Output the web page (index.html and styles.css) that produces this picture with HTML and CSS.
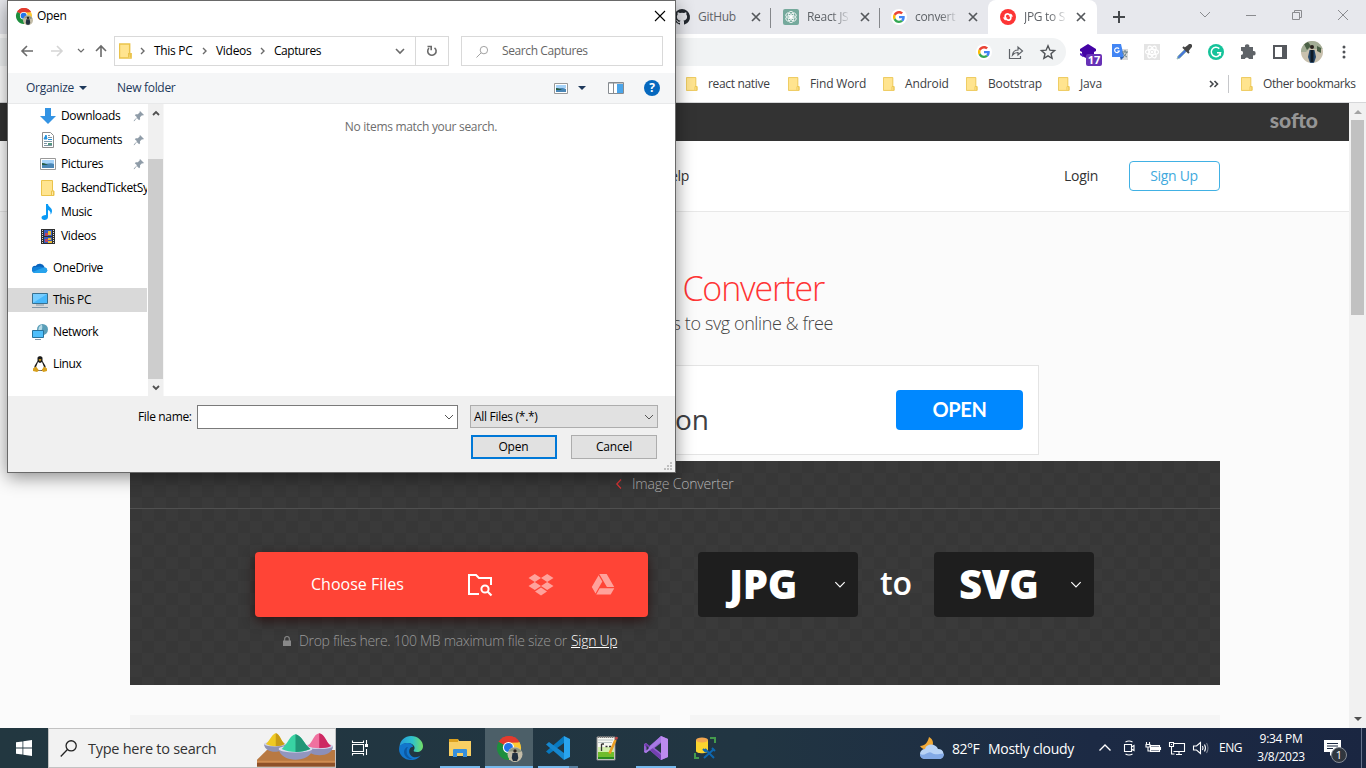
FILE: index.html
```html
<!DOCTYPE html>
<html lang="en">
<head>
<meta charset="utf-8">
<title>JPG to SVG</title>
<link rel="stylesheet" href="styles.css">
</head>
<body>
<svg class="defs" width="0" height="0">
  <defs>
    <symbol id="folder" viewBox="0 0 14 16"><path d="M.5.5h11v10.500h1.500v4.500H.5z" fill="#ffe48f" stroke="#eac34c"/><path d="M10.500 15v-4h2v4" fill="#ffe9a5" stroke="#eac34c"/></symbol>
    <symbol id="google" viewBox="0 0 48 48"><path fill="#ea4335" d="M24 9.500c3.500 0 6.700 1.200 9.200 3.600l6.900-6.900C35.900 2.400 30.500 0 24 0 14.600 0 6.500 5.400 2.600 13.200l8 6.200C12.400 13.700 17.700 9.500 24 9.500z"/><path fill="#4285f4" d="M47 24.600c0-1.600-.2-3.100-.4-4.600H24v9h12.900c-.6 3-2.200 5.500-4.700 7.200l7.700 6C44.400 38 47 31.800 47 24.600z"/><path fill="#fbbc05" d="M10.500 28.600a14 14 0 0 1 0-9.200l-8-6.200a24 24 0 0 0 0 21.600z"/><path fill="#34a853" d="M24 48c6.500 0 11.900-2.100 15.900-5.800l-7.700-6c-2.200 1.500-4.900 2.300-8.200 2.300-6.300 0-11.600-4.200-13.500-9.900l-8 6.200C6.500 42.600 14.600 48 24 48z"/></symbol>
    <symbol id="chrome" viewBox="0 0 24 24" overflow="visible"><path d="M12 12 1.600 6A12 12 0 0 1 22.400 6z" fill="#e33b2e"/><path d="M12 12 22.400 6A12 12 0 0 1 12 24z" fill="#fcc934"/><path d="M12 12v12A12 12 0 0 1 1.600 6z" fill="#1e8e3e"/><path d="M12 6.500h10.700L17 15z" fill="#fcc934"/><path d="M1.600 6 7 15l5-3z" fill="#1e8e3e"/><path d="M1.600 6 12 6.500 22.400 6A12 12 0 0 0 1.600 6z" fill="#e33b2e"/><circle cx="11.500" cy="11.500" r="5.600" fill="#fff"/><circle cx="11.500" cy="11.500" r="4.500" fill="#2374ea"/><circle cx="18" cy="18.500" r="7.500" fill="#c4bda8"/><path d="M11.500 15.500a7.500 7.500 0 0 1 13 0l-3 1-4-1z" fill="#8f9680"/><circle cx="18" cy="15" r="1.700" fill="#2b2420"/><path d="M15.500 17h5l.8 5-1.300 3h-4l-1.300-3z" fill="#22303f"/></symbol>
    <symbol id="pin" viewBox="0 0 12 12"><path d="M7 1l4 4-1.200.5-.8-.2-2 2 .1 2-1 .9-2.300-2.300L1.500 11l-.8.200.3-.9L4 7.300 1.800 5.200l1-1 2 .1 2-2L6.600 1.700z" fill="#8f9ca8"/></symbol>
    <symbol id="down" viewBox="0 0 10 6"><path d="M1 1l4 4 4-4" fill="none" stroke="currentColor"/></symbol>
    <symbol id="x" viewBox="0 0 10 10"><path d="M1 1l8 8M9 1 1 9" fill="none" stroke="currentColor" stroke-width="1.700"/></symbol>
  </defs>
</svg>

<div class="browser">
  <div class="tabs">
    <div class="tab"><svg class="fav" viewBox="0 0 16 16"><path fill="#24292f" d="M8 0a8 8 0 0 0-2.500 15.600c.4.100.5-.2.500-.4v-1.400c-2.200.5-2.700-1-2.700-1-.4-.9-.9-1.200-.9-1.200-.7-.5.100-.5.100-.5.800.1 1.200.8 1.200.8.700 1.300 1.900.9 2.300.7.100-.5.300-.9.500-1.100-1.800-.2-3.600-.9-3.600-4 0-.9.300-1.600.8-2.100-.1-.2-.4-1 .1-2.100 0 0 .7-.2 2.200.8a7.500 7.500 0 0 1 4 0c1.500-1 2.200-.8 2.200-.8.400 1.100.2 1.900.1 2.100.5.600.8 1.300.8 2.100 0 3.100-1.900 3.800-3.700 4 .3.300.6.800.6 1.500v2.200c0 .2.100.5.500.4A8 8 0 0 0 8 0z"/></svg><span class="tab-name">GitHub</span><svg class="close"><use href="#x"/></svg></div>
    <div class="tab"><svg class="fav" viewBox="0 0 16 16"><rect width="16" height="16" rx="2" fill="#75a99c"/><g fill="none" stroke="#fff" stroke-width=".8"><ellipse cx="8" cy="5.500" rx="2.500" ry="3.200"/><ellipse cx="8" cy="5.500" rx="2.500" ry="3.200" transform="rotate(60 8 8)"/><ellipse cx="8" cy="5.500" rx="2.500" ry="3.200" transform="rotate(120 8 8)"/><ellipse cx="8" cy="5.500" rx="2.500" ry="3.200" transform="rotate(180 8 8)"/><ellipse cx="8" cy="5.500" rx="2.500" ry="3.200" transform="rotate(240 8 8)"/><ellipse cx="8" cy="5.500" rx="2.500" ry="3.200" transform="rotate(300 8 8)"/></g></svg><span class="tab-name fade">React JS</span><svg class="close"><use href="#x"/></svg></div>
    <div class="tab last"><svg class="fav" viewBox="0 0 16 16"><circle cx="8" cy="8" r="8" fill="#fff"/><use href="#google" x="2" y="2" width="12" height="12"/></svg><span class="tab-name fade">convert i</span><svg class="close"><use href="#x"/></svg></div>
    <div class="tab active"><svg class="fav" viewBox="0 0 16 16"><circle cx="8" cy="8" r="8" fill="#fd3535"/><path d="M5.200 10.500V7a2.200 2.200 0 0 1 3-2L10 6M10.800 5.500V9a2.200 2.200 0 0 1-3 2L6 10" fill="none" stroke="#fff" stroke-width="1.700"/><path d="M2.800 8.500h4.600l-2.200 3zM8.600 7.500h4.600l-2.400-3z" fill="#fff"/></svg><span class="tab-name fade">JPG to S</span><svg class="close"><use href="#x"/></svg></div>
    <svg class="plus" viewBox="0 0 12 12"><path d="M6 0v12M0 6h12" stroke="#45484c" stroke-width="2"/></svg>
    <div class="wincontrols">
      <svg viewBox="0 0 12 12"><path d="M1 3l5 5 5-5"/></svg>
      <svg viewBox="0 0 12 12"><path d="M1 6.500h10"/></svg>
      <svg viewBox="0 0 12 12"><path d="M1.500 3.500h7v7h-7zM3.500 3V1.500h7v7H9"/></svg>
      <svg viewBox="0 0 12 12"><path d="M1 1l10 10M11 1 1 11"/></svg>
    </div>
  </div>
  <div class="toolbar">
    <div class="omnibox">
      <svg viewBox="0 0 16 16"><circle cx="8" cy="8" r="8" fill="#fff"/><use href="#google" x="2" y="2" width="12" height="12"/></svg>
      <svg viewBox="0 0 16 16"><path d="M1.500 5v9.500h11V12" fill="none" stroke="#5f6368" stroke-width="1.200"/><path d="M4.500 11c.5-3.500 2.500-5 5.500-5V3l4.500 4L10 11V8.500c-2.500 0-4 .7-5.500 2.500z" fill="none" stroke="#5f6368" stroke-width="1.200"/></svg>
      <svg viewBox="0 0 16 16"><path d="M8 1.800l1.900 4.400 4.700.4-3.600 3.100 1.100 4.600L8 11.800l-4.100 2.500L5 9.700 1.400 6.600l4.700-.4z" fill="none" stroke="#505357" stroke-width="1.400"/></svg>
    </div>
    <div class="extensions">
      <svg viewBox="0 0 24 24"><path d="M12 4l8 5v2l-2 1v4l-6 3-6-3v-4l-2-1V9z" fill="#4403a5"/><path d="M4 13l3 1v3l-3-2z" fill="#5a20c0"/></svg>
      <svg viewBox="0 0 24 24"><path d="M12 9h8v11h-8z" fill="#d8d8d8"/><path d="M4 4h9l3 13H4z" fill="#4285f4"/><path d="M12 17h4l-3 3z" fill="#2a5db0"/><path d="M14 12h6M17 10v2M15 17c2-1 3-3 3.500-5M15 13c1 2 2 3 4 4" stroke="#667f86" fill="none"/><path d="M11 8.800A2.400 2.400 0 1 0 11.300 11H9.300" fill="none" stroke="#fff" stroke-width="1.200"/></svg>
      <svg viewBox="0 0 24 24"><rect x="4" y="4" width="16" height="16" fill="#e4e4e4"/><g fill="none" stroke="#fff" stroke-width="1.200"><ellipse cx="12" cy="12" rx="6.500" ry="2.600"/><ellipse cx="12" cy="12" rx="6.500" ry="2.600" transform="rotate(60 12 12)"/><ellipse cx="12" cy="12" rx="6.500" ry="2.600" transform="rotate(120 12 12)"/></g><circle cx="12" cy="12" r="1.300" fill="#fff"/></svg>
      <svg viewBox="0 0 24 24"><path d="M5 19l1-3 7-7 2 2-7 7z" fill="#4a79d8" stroke="#9bb"/><path d="M12 8l4-3 1-1h2l1 1v2l-1 1-3 4z" fill="#464646"/><path d="M11 7l6 6" stroke="#464646" stroke-width="2"/></svg>
      <svg viewBox="0 0 24 24"><circle cx="12" cy="12" r="8" fill="#15c39a"/><path d="M15.300 8.600A4.700 4.700 0 1 0 16.600 12.700H13M16.300 12.700v3" fill="none" stroke="#fff" stroke-width="1.500"/></svg>
      <svg viewBox="0 0 24 24"><path d="M5 7h4a2.200 2.200 0 1 1 4.300 0H17v4a2.200 2.200 0 1 1 0 4.300V19h-4a2.200 2.200 0 0 0-4.200 0H5v-4a2 2 0 0 0 0-4.200z" fill="#5f6368"/></svg>
      <svg viewBox="0 0 24 24"><path d="M6 6h12v12H6z" fill="#fff" stroke="#55585d" stroke-width="2"/><path d="M14 5h5v14h-5z" fill="#55585d"/></svg>
      <svg viewBox="0 0 24 24"><defs><clipPath id="face"><circle cx="12" cy="12" r="11"/></clipPath></defs><g clip-path="url(#face)"><path d="M0 0h24v24H0z" fill="#c9c1ae"/><path d="M0 0h24v9H14l-3-2-5 5H0z" fill="#a3ad96"/><path d="M4 4l4-2 3 4-4 4zM17 6l4 2v5l-4-2z" fill="#4b6046"/><path d="M9.500 10h5l1.500 7-2 6h-4l-2-6z" fill="#27486b"/><path d="M12 10v12" stroke="#101b25" stroke-width="3"/><circle cx="12" cy="7" r="2" fill="#281f1c"/></g></svg>
      <svg viewBox="0 0 24 24"><g fill="#505357"><circle cx="12" cy="7" r="1.500"/><circle cx="12" cy="12" r="1.500"/><circle cx="12" cy="17" r="1.500"/></g></svg>
      <span class="ext-count">17</span>
    </div>
  </div>
  <div class="bookmarks">
    <div class="bm b1"><svg><use href="#folder"/></svg><span>react native</span></div>
    <div class="bm b2"><svg><use href="#folder"/></svg><span>Find Word</span></div>
    <div class="bm b3"><svg><use href="#folder"/></svg><span>Android</span></div>
    <div class="bm b4"><svg><use href="#folder"/></svg><span>Bootstrap</span></div>
    <div class="bm b5"><svg><use href="#folder"/></svg><span>Java</span></div>
    <svg class="more" viewBox="0 0 10 8"><path d="M1 1l3 3-3 3M5.500 1l3 3-3 3" fill="none" stroke="#45484c" stroke-width="1.600"/></svg>
    <div class="bm other"><svg><use href="#folder"/></svg><span>Other bookmarks</span></div>
  </div>
  <div class="viewport">
    <div class="page">
      <div class="softbar"><span>softo</span></div>
      <header class="site-head"><span class="help">Help</span><span class="login">Login</span><a class="signup">Sign Up</a></header>
      <main>
        <h1>Converter</h1>
        <p class="sub">files to svg online &amp; free</p>
        <div class="ad"><span class="ad-text">on</span><span class="ad-btn">OPEN</span></div>
        <section class="converter">
          <div class="crumb"><svg viewBox="0 0 6 10"><path d="M5 .5.800 5 5 9.500" fill="none" stroke="#e03535" stroke-width="1.200"/></svg><span>Image Converter</span></div>
          <div class="work">
            <div class="left">
              <div class="choose"><span>Choose Files</span>
                <svg viewBox="0 0 26 26"><path d="M12 22H2V3h7l3 3h12v7" fill="none" stroke="#fff" stroke-width="2"/><circle cx="18" cy="17" r="3.600" fill="none" stroke="#fff" stroke-width="2"/><path d="M20.500 19.500l4 4" stroke="#fff" stroke-width="2.200"/></svg>
                <svg viewBox="0 0 26 26" fill="#ffa29b"><path d="M6.800 2 13 6 6.800 10 .5 6zM19.200 2l6.300 4-6.300 4L13 6zM6.800 10l6.200 4-6.200 4L.5 14zM19.200 10l6.300 4-6.300 4-6.200-4zM13 15.600l6 3.900-6 4-6-4z"/></svg>
                <svg viewBox="0 0 26 26" fill="#ffa29b"><path d="M9.300 2h7.400l7.500 13h-7.300zM8.600 3.200l3.700 6.300-6.800 12L1.800 15zM9.700 16.200h14.600L20.700 22.500H6.200z"/></svg>
              </div>
              <div class="note"><svg viewBox="0 0 8 10"><path d="M0 4.500h8V10H0z" fill="#898989"/><path d="M1.700 5V2.800a2.300 2.300 0 0 1 4.600 0V5" fill="none" stroke="#898989" stroke-width="1.100"/></svg><span>Drop files here. 100 MB maximum file size or</span><a>Sign Up</a></div>
            </div>
            <div class="format"><b>JPG</b><svg><use href="#down"/></svg></div>
            <span class="to">to</span>
            <div class="format"><b>SVG</b><svg><use href="#down"/></svg></div>
          </div>
        </section>
        <div class="cards"><div></div><div></div></div>
      </main>
    </div>
    <div class="scroll"><svg viewBox="0 0 8 4"><path d="M0 4l4-4 4 4z" fill="#a3a3a3"/></svg><div class="thumb"></div><svg viewBox="0 0 8 4"><path d="M0 0h8L4 4z" fill="#505050"/></svg></div>
  </div>
</div>

<div class="dialog">
  <div class="title"><svg class="app"><use href="#chrome"/></svg><span>Open</span><svg class="shut" viewBox="0 0 12 12"><path d="M1 1l10 10M11 1 1 11" stroke="#000" stroke-width="1.100"/></svg></div>
  <div class="nav">
    <svg class="back" viewBox="0 0 12 12"><path d="M12 6H1M6 1 1 6l5 5"/></svg>
    <svg class="fwd" viewBox="0 0 12 12"><path d="M0 6h11M6 1l5 5-5 5"/></svg>
    <svg class="recent" viewBox="0 0 10 6"><path d="M2 1l3 3 3-3"/></svg>
    <svg class="up" viewBox="0 0 12 12"><path d="M6 12V1M1 6l5-5 5 5"/></svg>
    <div class="address">
      <svg class="dir"><use href="#folder"/></svg>
      <svg class="chev" viewBox="0 0 6 8"><path d="M1 1l3 3-3 3"/></svg><span class="c1">This PC</span>
      <svg class="chev" viewBox="0 0 6 8"><path d="M1 1l3 3-3 3"/></svg><span class="c2">Videos</span>
      <svg class="chev" viewBox="0 0 6 8"><path d="M1 1l3 3-3 3"/></svg><span class="c3">Captures</span>
      <svg class="drop" viewBox="0 0 10 6"><path d="M1 1l4 4 4-4"/></svg>
      <div class="refresh"><svg viewBox="0 0 12 12"><path d="M8.500 2.800A4.200 4.200 0 1 1 3 3.100M1.500 1.500h3.700v3.700"/></svg></div>
    </div>
    <div class="search"><svg viewBox="0 0 14 14"><circle cx="8.500" cy="5.500" r="4"/><path d="M5.500 8.500l-5 5"/></svg><span>Search Captures</span></div>
  </div>
  <div class="cmds">
    <span class="org">Organize</span><svg class="tri" viewBox="0 0 8 4"><path d="M0 0h8L4 4z"/></svg><span class="newf">New folder</span>
    <svg class="view" viewBox="0 0 14 11"><path d="M.5.5h13v10H.5z" fill="#fff" stroke="#999"/><path d="M2 2h10v3H2z" fill="#a6d3f8"/><path d="M2 5c4 1 7-1 10 1v3H2z" fill="#4a86b5"/><path d="M2 5c3 0 4 1 6 2H2z" fill="#245b45"/></svg>
    <svg class="tri t2" viewBox="0 0 8 4"><path d="M0 0h8L4 4z"/></svg>
    <svg class="pane" viewBox="0 0 16 12"><path d="M.5.500h15v11H.5z" fill="#fff" stroke="#868b90"/><path d="M1 1h14M5.500 1v10" stroke="#868b90"/><path d="M9 2h6v9H9z" fill="#4aa5ea"/></svg>
    <span class="q">?</span>
  </div>
  <div class="body">
    <div class="tree">
      <div class="row"><svg viewBox="0 0 16 16"><path d="M5 0h6v8h5l-8 8-8-8h5z" fill="#3494e4"/></svg><span>Downloads</span><svg class="pin"><use href="#pin"/></svg></div>
      <div class="row"><svg viewBox="0 0 16 16"><path d="M2.500.5h8l3 3v12h-11z" fill="#fff" stroke="#8c8c8c"/><path d="M4 13.500h8M4 11.500h3M4 9.500h8M8 5.500h4M8 3.500h2" stroke="#7d96a5"/><path d="M4 7l2-4 1 4zM8 7.500h4" fill="#2090dd" stroke="#2090dd"/><path d="M8 11h4v2H8z" fill="#54967f"/></svg><span>Documents</span><svg class="pin"><use href="#pin"/></svg></div>
      <div class="row"><svg viewBox="0 0 16 16"><path d="M.5 2.500h15v11H.5z" fill="#fff" stroke="#999"/><path d="M2 4h12v4H2z" fill="#a6d3f8"/><path d="M2 7c5 2 8-1 12 1v4H2z" fill="#4a86b5"/><path d="M2 7c3 0 4 1 6 2H2z" fill="#245b45"/></svg><span>Pictures</span><svg class="pin"><use href="#pin"/></svg></div>
      <div class="row"><svg viewBox="0 0 16 16"><use href="#folder" x="1" width="14" height="16"/></svg><span class="long">BackendTicketSy</span></div>
      <div class="row"><svg viewBox="0 0 16 16"><path d="M6 0h2c0 3 4 3.500 4 7 0 1.500-.8 3-1.500 3.500C11 8 9.500 6.500 8 6v7c0 2-1.700 3-3.500 3S1.500 15 1.500 13.500 3.500 11 6 11z" fill="#0b9af5"/></svg><span>Music</span></div>
      <div class="row"><svg viewBox="0 0 16 16"><path d="M1 1h14v15H1z" fill="#303030"/><path d="M2.500 2v14M13.500 2v14" stroke="#ddd" stroke-dasharray="1 1"/><path d="M4 2h8v6H4zM4 9h8v6H4z" fill="#365fc2"/><path d="M5 5h3v3H5zM5 11h3v3H5z" fill="#be4360"/><path d="M8 3h3v4H8zM8 10h3v2H8zM8 13h4v2H8z" fill="#e9b92e"/></svg><span>Videos</span></div>
      <div class="row top gap"><svg viewBox="0 0 16 16"><path d="M3 12.500A3.300 3.300 0 0 1 3.600 5.900 5 5 0 0 1 12.500 7l-6 5z" fill="#0a64bd"/><path d="M3 13A3 3 0 0 1 1.800 7.200L8 6.500l5 1a2.800 2.800 0 0 1 0 5.500z" fill="#1180d8"/><path d="M3 13c-1.500 0-2.300-1-2.300-1L9 8.500l4-1a2.800 2.800 0 0 1 0 5.500z" fill="#27a3ec"/></svg><span>OneDrive</span></div>
      <div class="row top gap sel"><svg viewBox="0 0 16 16"><path d="M.5 1.500h15v10H.5z" fill="#48b8fb" stroke="#39708f"/><path d="M1 2h14L1 11z" fill="#76cdff"/><path d="M4 13h8M0 15.500h16" stroke="#8297a7"/></svg><span>This PC</span></div>
      <div class="row top gap"><svg viewBox="0 0 16 16"><circle cx="10.500" cy="5.500" r="5.500" fill="#5a9eb8"/><path d="M10 .5c-4 2-4 5-3 8 2-1 4-3 3-8z" fill="#b7dbe8"/><path d="M.5 6.500h11v7H.5z" fill="#4fbffb" stroke="#28739c"/><path d="M3 15.500h6" stroke="#8297a7"/></svg><span>Network</span></div>
      <div class="row top gap"><svg viewBox="0 0 16 16"><path d="M5.500 2c0-2.500 5-2.500 5 0v3l3 5c.5 3-2 5-5.500 5s-6-2-5.500-5l3-5z" fill="#1b1b1b"/><path d="M6 6l2 1 2-1 2 5c0 2-2 3.500-4 3.500S4 13 4 11z" fill="#fff"/><path d="M6.500 3.500 8 3l1.500.5L8 5.500zM1 12.500l3-2 3 4-2 1.500-4-1zM15 12.500l-3-2-2.500 4 2 1.500 3.500-1z" fill="#d8a01d"/></svg><span>Linux</span></div>
    </div>
    <div class="treebar"><svg viewBox="0 0 10 6"><path d="M2 5l3-3 3 3"/></svg><div></div><svg viewBox="0 0 10 6"><path d="M2 1l3 3 3-3"/></svg></div>
    <div class="files">No items match your search.</div>
  </div>
  <div class="foot">
    <div class="frow"><label>File name:</label><div class="combo"><svg><use href="#down"/></svg></div><div class="types"><span>All Files (*.*)</span><svg><use href="#down"/></svg></div></div>
    <div class="frow btns"><button class="primary">Open</button><button>Cancel</button></div>
    <svg class="grip" viewBox="0 0 8 8"><path d="M6 0h2v2H6zM3 3h2v2H3zM6 3h2v2H6zM0 6h2v2H0zM3 6h2v2H3zM6 6h2v2H6z" fill="#bfbfbf"/></svg>
  </div>
</div>

<div class="taskbar">
  <div class="start"><svg viewBox="0 0 16 16" fill="#fff"><path d="M0 2.300 6.500 1.400v6.200H0zM7.300 1.300 16 0v7.600H7.300zM0 8.400h6.500v6.200L0 13.700zM7.300 8.400H16V16l-8.700-1.300z"/></svg></div>
  <div class="tsearch"><svg class="glass" viewBox="0 0 16 16"><circle cx="10.500" cy="5.500" r="4.800"/><path d="M7 9 .7 15.500"/></svg><span>Type here to search</span>
    <svg class="holi" viewBox="0 0 80 36"><path d="M10 18h69v16H0v-6z" fill="#b87942"/><path d="M0 29h79v3H0z" fill="#d08d52"/><path d="M0 31h79v4H0z" fill="#8d5129"/><path d="M7 12h22c0 10-21 11-22 0z" fill="#8e92b4"/><ellipse cx="18" cy="12" rx="11" ry="2.500" fill="#d4d6ea"/><path d="M9 12C14 7 15 2 19 1c4 1 5 7 9 11-6 3-13 3-19 0z" fill="#efc923"/><path d="M19 1c4 1 5 7 9 11-3 2-6 2-9 2z" fill="#c99c16"/><path d="M49 14h28c0 12-26 13-28 0z" fill="#8c8fb8"/><ellipse cx="63" cy="14" rx="14" ry="3" fill="#d0d2e8"/><path d="M51 14C57 10 57 2 63 1c6 1 6 8 12 13-7 3-17 3-24 0z" fill="#f0719f"/><path d="M63 1c6 1 6 8 12 13-4 2-8 2-12 2z" fill="#cd2962"/><path d="M22 17h34c-1 14-32 15-34 0z" fill="#9296be"/><ellipse cx="39" cy="17" rx="17" ry="3.500" fill="#dddff0"/><path d="M25 17C31 12 33 3 39 2c6 1 8 9 15 15-8 4-21 4-29 0z" fill="#38d3a3"/><path d="M39 2c6 1 8 9 15 15-5 2-10 3-15 3z" fill="#209676"/></svg>
  </div>
  <div class="tview"><svg viewBox="0 0 18 18" fill="none" stroke="#fff"><path d="M1.500 1.500v2h11v-2M1.500 16.500v-2h11v2M1.500 5.500h11v7h-11zM15.500 1v5M15.500 10v6" stroke-width="1.100"/><path d="M14 5h3v3h-3z" fill="#fff" stroke="none"/></svg></div>
  <div class="apps">
    <div class="t"><svg viewBox="0 0 24 24"><defs><linearGradient id="eg" x1="0" x2="1"><stop offset="0" stop-color="#249bdc"/><stop offset=".55" stop-color="#2fc2cc"/><stop offset="1" stop-color="#73df65"/></linearGradient></defs><path d="M.5 11C1 4 6 0 12 0c7 0 12 5 12 10 0 4-3 6-6 6-3 0-4-1-3-2 2-3-1-7-6-7-4 0-7 2-8.500 4z" fill="url(#eg)"/><path d="M0 13C0 8 5 7 9 7c3 0 5 2 5 4-4-1-6 7 0 10 4 1 7-1 8-2-3 4-6 5-10 5C5 24 0 19 0 13z" fill="#1276cc"/><path d="M9 11c-3 4-1 11 5 12-5 1-9-3-9-7 0-3 2-5 4-5z" fill="#0c59a4"/></svg></div>
    <div class="t run"><svg viewBox="0 0 24 24"><path d="M1 3h9l1 2h12v15H1z" fill="#f8cf63"/><path d="M1 3h9v3H1z" fill="#dca11e"/><path d="M5 21v-7c0-1 1-1 1-1h12s1 0 1 1v7h-4v-4H9v4z" fill="#3790dc"/></svg></div>
    <div class="t cur"><svg class="big"><use href="#chrome"/></svg></div>
    <div class="t run two"><svg viewBox="0 0 24 24"><path d="M18 0v7L3 18l-3-2.500z" fill="#0879bf"/><path d="M18 24v-7L3 6 0 8.500z" fill="#1687ce"/><path d="M18 0l6 3v18l-6 3z" fill="#29a3ed"/></svg></div>
    <div class="t"><svg viewBox="0 0 24 24"><path d="M2 1h18v23H2z" fill="#f7f7f1" stroke="#888"/><path d="M3 11h16v12H3z" fill="#d3efad"/><path d="M3 16h16v7H3z" fill="#70bd2b"/><path d="M3 21h16v2H3z" fill="#2a8b20"/><path d="M3 4h15M3 6.500h14" stroke="#bbc5c5"/><path d="M6.500 8v7M6.500 8h2.500M10.500 10.500h2M14 10.500h2" stroke="#343434" stroke-width="1.300"/><path d="M3 1h16" stroke="#777" stroke-dasharray="1 1" stroke-width="2"/><path d="M14.500 17.500 20.500 4" stroke="#e99d24" stroke-width="2.600"/><path d="M20.800 3.400 22 1" stroke="#c04545" stroke-width="2.600"/></svg></div>
    <div class="t run"><svg viewBox="0 0 24 24"><path d="M17 0l7 3v18l-7 3L5.500 14 2 17l-2-1V8l2-1 3.500 3z" fill="#9460d3"/><path d="M2 7l15 12v5L0 9z" fill="#7440b0"/><path d="M17 0v6L2 17l-2-1z" fill="#a77ae3"/><path d="M17 0l7 3v18l-7 3z" fill="#bd8bf0"/><path d="M17 7v10l-6.500-5zM2.500 9.500v5l2.500-2.500z" fill="#243742"/></svg></div>
    <div class="t"><svg viewBox="0 0 24 24"><path d="M3 4v11c0 3 12 3 12 0V4z" fill="#fbd42f"/><ellipse cx="9" cy="4" rx="6" ry="2.600" fill="#f3a750"/><path d="M17 2h5v5M6 22H2v-5" fill="none" stroke="#449a4c" stroke-width="2"/><path d="M11 22l10-9M12 13l9 9M10 13l3 3M19 12l3 3" stroke="#0e67b0" stroke-width="2"/></svg></div>
  </div>
  <div class="weather"><svg viewBox="0 0 24 24"><path d="M9 1c-1 5-4 9-9 9 5 7 13 3 13-3 0-3-2-5-4-6z" fill="#f1a936"/><path d="M5 23a5 5 0 0 1 0-10c1-6 11-6 13 0a5 5 0 0 1 1 10z" fill="#b9d3f5"/><path d="M5 23c-4 0-5-3-5-5 5 3 8-4 12-1s9 0 12 1c0 3-2 5-5 5z" fill="#83a9e5"/></svg><span class="temp">82°F</span><span class="sky">Mostly cloudy</span></div>
  <div class="tray">
    <svg viewBox="0 0 16 16"><path d="M2.500 10.500 8 5l5.500 5.500" stroke-width="1.400"/></svg>
    <svg viewBox="0 0 16 16"><path d="M3.500 4.500h7v7h-7zM10.500 7l2.500-1.500v5L10.500 9M4.500 2q3.500-2 7 0M4.500 14q3.500 2 7 0"/></svg>
    <svg viewBox="0 0 16 16"><path d="M5.500 5.500h9v6h-9zM15.500 7v3"/><path d="M6.500 7h7v3h-7z" fill="#fff"/><path d="M.5 4.500h5M1.500 2v2M4.500 2v2M1 5v2h4V5M3 7v4h2"/></svg>
    <svg viewBox="0 0 16 16"><path d="M4.500 3.500h11v8h-11M7 14.500h6M10 12v2M.5 2.500h4v4h-4zM2.500 7v7h3M2 4.500h1"/></svg>
    <svg viewBox="0 0 16 16"><path d="M.5 6h3l4-3.500v11L3.500 10h-3zM9.500 6q1 2 0 4M11.500 4.500q2 3.500 0 7"/><path d="M13.500 3q3 5 0 10" opacity=".4"/></svg>
  </div>
  <span class="lang">ENG</span>
  <div class="clock"><span>9:34 PM</span><span>3/8/2023</span></div>
  <div class="notif"><svg viewBox="0 0 17 16"><path d="M0 0h17v12h-7l-4 4v-4H0z" fill="#fff"/><path d="M3 3.500h11M3 6h11M3 8.500h6" stroke="#1b2942"/></svg><span>1</span></div>
  <div class="peek"></div>
</div>
</body>
</html>
```

FILE: styles.css
```css
* { box-sizing: border-box; }
body { margin: 0; width: 1366px; height: 768px; overflow: hidden; position: relative; display: flex; flex-direction: column; font-family: "Open Sans", "Noto Sans", sans-serif; font-size: 12px; color: #000; }
.defs { position: absolute; }
svg { display: block; flex: none; overflow: visible; }
span, label, b { white-space: nowrap; }

/* browser chrome */
.browser { height: 728px; display: flex; flex-direction: column; background: #fff; }
.tabs { height: 34px; background: #e7e8ed; padding-left: 662px; display: flex; align-items: center; }
.tab { width: 109px; height: 34px; padding-left: 12px; display: flex; align-items: center; color: #5f6368; background: linear-gradient(#85878b, #85878b) right 8px / 1px 20px no-repeat; }
.tab.last { width: 108px; background: none; padding-left: 11px; }
.tab.active { background: #fff; border-radius: 8px 8px 0 0; }
.tab.active .close { margin-left: 3px; }
.fav { width: 16px; height: 16px; margin-right: 8px; }
.tab-name { width: 49px; overflow: hidden; letter-spacing: -.3px; padding-bottom: 1px; }
.fade { width: 46px; margin-right: 3px; -webkit-mask-image: linear-gradient(90deg, #000 55%, transparent 96%); mask-image: linear-gradient(90deg, #000 55%, transparent 96%); }
.close { width: 10px; height: 10px; margin-left: 4px; color: #55585c; }
.plus { width: 12px; height: 12px; margin-left: 16px; }
.wincontrols { display: flex; gap: 34px; margin-left: auto; padding: 0 17px 5px 0; }
.wincontrols svg { width: 12px; height: 12px; fill: none; stroke: #8a8b8f; }
.toolbar { height: 36px; display: flex; align-items: center; }
.omnibox { width: 1066px; height: 28px; border-radius: 0 14px 14px 0; background: #f1f3f4; display: flex; align-items: center; justify-content: flex-end; gap: 16px; padding-right: 10px; }
.omnibox svg { width: 16px; height: 16px; }
.extensions { position: relative; display: flex; gap: 8px; padding-left: 10px; }
.extensions svg { width: 24px; height: 24px; }
.ext-count { position: absolute; left: 20px; top: 14px; width: 16px; height: 12px; border-radius: 2px; background: #6732b6; color: #fff; font: bold 11px/12px "Open Sans", sans-serif; text-align: center; }
.bookmarks { height: 33px; border-bottom: 1px solid #d6d7d9; display: flex; align-items: center; padding: 0 0 4px 686px; color: #3c4043; }
.bm { display: flex; align-items: center; white-space: nowrap; letter-spacing: -.33px; }
.bm span { padding-bottom: 1px; }
.b2 span, .b3 span, .b4 span, .b5 span { letter-spacing: -.15px; }
.bm svg { width: 12px; height: 14px; margin-right: 10px; }
.b1 { width: 102px; } .b2 { width: 95px; } .b3 { width: 83px; } .b4 { width: 92px; } .b5 { width: 151px; }
.more { width: 10px; height: 8px; }
.other { margin-left: 9px; padding-left: 12px; border-left: 1px solid #c6c7ca; letter-spacing: -.4px; }

/* web page */
.viewport { flex: 1; display: flex; }
.page { width: 1349px; background: #fbfbfb; }
.softbar { height: 38px; background: #333; color: #959595; display: flex; justify-content: flex-end; padding: 4px 31px 0 0; font: 900 21px/26px Lato, sans-serif; letter-spacing: 0; }
.site-head { height: 71px; background: #fff; border-bottom: 1px solid #e8e8e8; display: flex; align-items: center; font-size: 14px; color: #333; letter-spacing: -.3px; }
.site-head span { padding-bottom: 2px; }
.help { width: 404px; margin-left: 660px; }
.login { width: 65px; }
.signup { width: 91px; height: 30px; border: 1px solid #41b1e4; border-radius: 4px; color: #41a9dd; text-align: center; line-height: 28px; padding-right: 1px; }
main { width: 1090px; margin: 0 auto 0 130px; padding-top: 53px; }
h1 { margin: 0; padding-right: 396px; height: 47px; font-size: 34px; line-height: 46px; font-weight: 320; color: #ff3535; text-align: right; letter-spacing: -1.15px; }
.sub { margin: 0; padding-right: 387px; height: 28px; line-height: 22px; font-size: 18px; font-weight: 300; color: #444; text-align: right; letter-spacing: -.4px; }
.ad { width: 728px; height: 90px; margin: 25px 0 6px 181px; border: 1px solid #e4e4e4; background: #fff; display: flex; }
.ad-text { width: 397px; margin-right: 187px; padding-top: 31px; font-size: 28px; line-height: 44px; font-weight: 500; color: #3e4043; text-align: right; }
.ad-btn { width: 127px; height: 40px; margin-top: 24px; background: #08f; color: #fff; border-radius: 4px; font: 700 20px/38px Lato, sans-serif; letter-spacing: -.4px; text-align: center; }
.converter { height: 224px; background: repeating-conic-gradient(#3a3a3a 0 25%, #373737 0 50%) 0 0 / 24px 24px; }
.crumb { height: 48px; border-bottom: 1px solid #505050; display: flex; align-items: center; padding: 0 0 2px 486px; color: #b4b4b4; font-size: 14px; font-weight: 300; letter-spacing: -.2px; }
.crumb svg { width: 6px; height: 10px; margin-right: 10px; }
.work { display: flex; padding: 43px 126px 0 125px; }
.left { width: 393px; margin-right: 50px; }
.choose { height: 65px; display: flex; align-items: center; padding-left: 56px; background: #ff4436; border-radius: 4px; box-shadow: 0 4px 12px rgba(35, 0, 0, .65); color: #fff; font-size: 16px; }
.choose span { flex: none; width: 156px; letter-spacing: 0; padding-bottom: 2px; }
.choose svg { width: 26px; height: 26px; margin-right: 36px; }
.choose svg:nth-child(2) { margin-right: 35px; }
.choose svg:last-child { margin-right: 0; }
.note { display: flex; align-items: center; height: 48px; padding-left: 28px; font-size: 14px; font-weight: 300; color: #999; letter-spacing: -.31px; }
.note span, .note a { padding-bottom: 2px; }
.note svg { width: 8px; height: 10px; margin-right: 8px; }
.note a { color: #fff; text-decoration: underline; margin-left: 4px; white-space: nowrap; }
.format { width: 160px; height: 65px; border-radius: 4px; background: #1e1e1e; color: #fff; display: flex; align-items: center; justify-content: space-between; padding: 0 12px 0 25px; }
.format b { font-size: 40px; line-height: 63px; font-weight: 800; letter-spacing: -.3px; padding-bottom: 2px; }
.format:nth-child(2) b { padding-left: 6px; }
.format svg { width: 12px; height: 7px; }
.to { width: 76px; text-align: center; color: #fff; font-size: 32px; line-height: 61px; font-weight: 600; }
.cards { display: flex; gap: 30px; margin-top: 30px; }
.cards div { width: 530px; height: 13px; background: #f5f5f5; }
.scroll { width: 17px; background: #f1f1f1; display: flex; flex-direction: column; align-items: center; padding: 7px 0; }
.scroll svg { width: 8px; height: 4px; }
.thumb { width: 13px; height: 195px; background: #c1c1c1; margin: 6px 0 auto; }

/* open dialog */
.dialog { position: absolute; left: 7px; top: 0; width: 669px; height: 473px; border: 1px solid #696969; background: #fff; box-shadow: 0 4px 17px rgba(0, 0, 0, .45); display: flex; flex-direction: column; letter-spacing: -.3px; }
.title { height: 30px; display: flex; align-items: center; padding: 0 9px 0 8px; }
.title span { padding-bottom: 1px; }
.app { width: 16px; height: 16px; margin-right: 5px; }
.shut { width: 12px; height: 12px; margin-left: auto; }
.nav { height: 42px; display: flex; align-items: center; padding: 0 12px 2px 13px; }
.nav > svg, .address svg { fill: none; stroke: #6b6b6b; stroke-width: 1.600; width: 12px; height: 12px; }
.nav .fwd { margin-left: 18px; stroke: #d5d5d5; }
.nav .recent { width: 10px; height: 6px; margin-left: 13px; stroke-width: 1.200; }
.nav .up { margin: 0 7px 0 9px; }
.address { width: 335px; height: 30px; border: 1px solid #d9d9d9; display: flex; align-items: center; }
.address span, .search span { padding-bottom: 1px; }
.address .dir { width: 13px; height: 16px; margin: 0 8px 0 4px; stroke: none; }
.address .chev { width: 6px; height: 8px; margin-right: 8px; stroke-width: 1.400; }
.c1 { width: 48px; } .c2 { width: 44px; } .c3 { width: 121px; letter-spacing: -.45px; }
.address .drop { width: 10px; height: 6px; }
.refresh { width: 33px; height: 28px; border-left: 1px solid #d9d9d9; margin-left: auto; display: grid; place-items: center; }
.search { width: 202px; height: 30px; margin-left: 12px; border: 1px solid #d9d9d9; display: flex; align-items: center; padding-left: 14px; color: #666; }
.search svg { width: 13px; height: 13px; margin-right: 13px; fill: none; stroke: #999; }
.search span { letter-spacing: -.4px; }
.cmds { height: 31px; background: #f5f6f7; border-bottom: 1px solid #e8e9ea; display: flex; align-items: center; padding-left: 18px; color: #1e395b; letter-spacing: -.3px; }
.org, .newf { padding-bottom: 1px; }
.org { width: 53px; letter-spacing: -.28px; }
.tri { width: 8px; height: 4px; fill: #1e395b; }
.newf { width: 437px; margin-left: 30px; }
.view { width: 14px; height: 11px; }
.t2 { margin: 0 21px 0 10px; }
.pane { width: 16px; height: 12px; margin: 0 20px 0 1px; }
.q { width: 16px; height: 16px; border-radius: 8px; background: #0668be; color: #fff; font: bold 12px/16px "Open Sans", sans-serif; text-align: center; }
.body { height: 292px; display: flex; }
.tree { width: 140px; }
.row { width: 139px; height: 24px; display: flex; align-items: center; padding-left: 32px; overflow: hidden; }
.row > svg { width: 16px; height: 16px; margin-right: 5px; }
.row span { padding-bottom: 1px; letter-spacing: -.35px; }
.row .long { letter-spacing: -.38px; }
.row .pin { width: 12px; height: 12px; margin: 0 2px 0 auto; }
.row.top { padding-left: 24px; }
.gap { margin-top: 8px; }
.sel { background: #d9d9d9; }
.treebar { width: 16px; background: #f0f0f0; display: flex; flex-direction: column; align-items: center; padding: 6px 0 5px; border-right: 1px solid #f7f7f7; }
.treebar svg { width: 10px; height: 6px; fill: none; stroke: #505050; stroke-width: 1.800; }
.treebar div { width: 15px; height: 220px; margin: 43px 0 auto; background: #cdcdcd; }
.files { width: 511px; padding: 14px 0 0 3px; text-align: center; color: #6d6d6d; letter-spacing: -.3px; }
.foot { position: relative; flex: 1; background: #f0f0f0; padding-top: 9px; }
.frow { display: flex; height: 24px; align-items: flex-start; }
.frow label { width: 59px; margin-left: 130px; line-height: 24px; letter-spacing: -.35px; }
.combo { width: 261px; height: 24px; border: 1px solid #7a7a7a; background: #fff; display: flex; align-items: center; justify-content: flex-end; padding-right: 3px; }
.combo svg, .types svg { width: 10px; height: 6px; color: #555; }
.types { width: 188px; height: 23px; margin-left: 12px; border: 1px solid #adadad; background: #e1e1e1; display: flex; align-items: center; justify-content: space-between; padding: 0 3px; }
.btns { margin-top: 6px; padding-left: 463px; gap: 14px; }
button { width: 86px; height: 24px; padding: 0 0 1px; border: 1px solid #adadad; background: #e1e1e1; font: inherit; letter-spacing: -.15px; color: #000; }
.primary { border: 2px solid #0078d7; padding-right: 1px; }
.grip { position: absolute; right: 3px; bottom: 2px; width: 8px; height: 8px; }

/* taskbar */
.taskbar { height: 40px; display: flex; align-items: center; background: linear-gradient(90deg, #223740 0, #213542 55%, #1c2a44 80%, #1a2641); color: #fff; }
.start { width: 48px; display: grid; place-items: center; }
.start svg { width: 16px; height: 16px; }
.tsearch { width: 288px; height: 40px; background: #f2f2f2; border: 1px solid #c2c2c2; display: flex; align-items: center; padding-left: 11px; color: #333; font-size: 14.500px; }
.glass { width: 17px; height: 17px; fill: none; stroke: #222; stroke-width: 1.200; margin-right: 11px; }
.tsearch span { width: 169px; flex: none; letter-spacing: -.26px; }
.holi { width: 79px; height: 36px; margin-top: 3px; }
.tview { width: 50px; padding-left: 15px; }
.tview svg { width: 18px; height: 18px; }
.apps { display: flex; }
.t { width: 49px; height: 40px; display: grid; place-items: center; }
.t svg { width: 24px; height: 24px; }
.run { background: linear-gradient(#76b9ed, #76b9ed) 5px bottom / 40px 2px no-repeat; }
.two { background: linear-gradient(90deg, #76b9ed 31px, #587f9f 31px) 5px bottom / 40px 2px no-repeat; }
.cur { background: linear-gradient(#76b9ed, #76b9ed) 0 bottom / 48px 2px no-repeat, #4c5f68; width: 48px; margin-left: 1px; }
.weather { display: flex; align-items: center; margin-left: 191px; font-size: 14px; }
.weather svg { width: 24px; height: 24px; margin-right: 8px; }
.temp { width: 36px; letter-spacing: -.5px; }
.sky { width: 109px; letter-spacing: -.28px; }
.tray { display: flex; gap: 8px; width: 122px; }
.tray svg { width: 16px; height: 16px; fill: none; stroke: #fff; stroke-width: 1.100; }
.lang { width: 31px; font-size: 12px; letter-spacing: -.5px; padding-bottom: 1px; }
.clock { width: 62px; display: flex; flex-direction: column; align-items: center; line-height: 18px; letter-spacing: -.3px; }
.notif { position: relative; margin-left: 12px; }
.notif svg { width: 17px; height: 16px; }
.notif span { position: absolute; left: 7px; top: 7px; width: 16px; height: 16px; border-radius: 9px; border: 1px solid #858b95; background: #30363e; font-size: 11px; line-height: 14px; text-align: center; }
.peek { width: 5px; height: 40px; margin-left: auto; border-left: 1px solid #66718a; }
```
